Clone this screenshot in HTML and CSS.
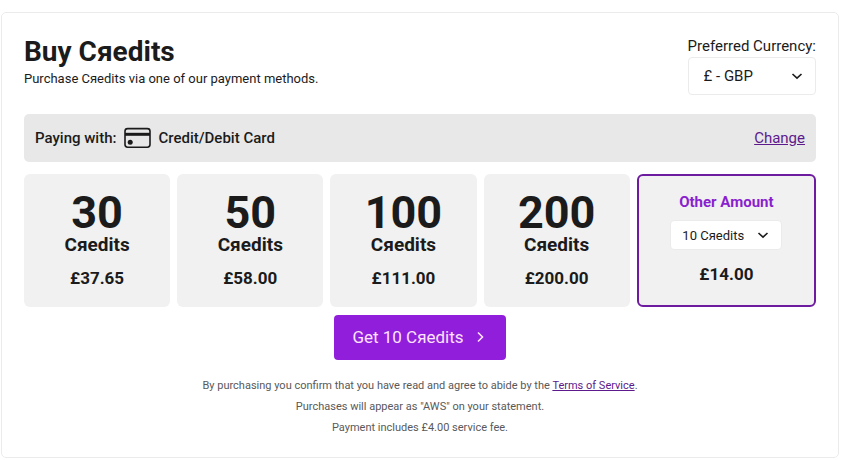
FILE: index.html
```html
<!DOCTYPE html>
<html lang="en">
<head>
<meta charset="utf-8">
<meta name="viewport" content="width=device-width, initial-scale=1">
<title>Buy Cяedits</title>
<link rel="stylesheet" href="styles.css">
</head>
<body>
<main class="panel">
  <header class="top">
    <div>
      <h1 class="title">Buy Cяedits</h1>
      <p class="subtitle">Purchase Cяedits via one of our payment methods.</p>
    </div>
    <div class="currency">
      <label class="currency-label" for="currency">Preferred Currency:</label>
      <div class="select select-large">
        <select id="currency"><option>£ - GBP</option></select>
        <svg class="chevron" viewBox="0 0 12 12" aria-hidden="true"><path d="M1.5 4L6 8.2 10.5 4"/></svg>
      </div>
    </div>
  </header>

  <section class="method">
    <span>Paying with:</span>
    <svg class="card-icon" viewBox="0 0 28 22" aria-hidden="true">
      <rect class="card-outline" x="2" y="1.6" width="25" height="18.6" rx="2.6"/>
      <path class="card-fill" d="M2 5.8h25v3H2z"/>
      <circle class="card-fill" cx="7.2" cy="15.2" r="2.5"/>
    </svg>
    <span>Credit/Debit Card</span>
    <a class="change" href="#">Change</a>
  </section>

  <section class="packs">
    <button class="pack" type="button">
      <span class="amount">30</span><span class="unit">Cяedits</span><span class="price">£37.65</span>
    </button>
    <button class="pack" type="button">
      <span class="amount">50</span><span class="unit">Cяedits</span><span class="price">£58.00</span>
    </button>
    <button class="pack" type="button">
      <span class="amount">100</span><span class="unit">Cяedits</span><span class="price">£111.00</span>
    </button>
    <button class="pack" type="button">
      <span class="amount">200</span><span class="unit">Cяedits</span><span class="price">£200.00</span>
    </button>
    <div class="pack pack-other">
      <label class="other-label" for="other">Other Amount</label>
      <div class="select select-small">
        <select id="other"><option>10 Cяedits</option></select>
        <svg class="chevron" viewBox="0 0 12 12" aria-hidden="true"><path d="M1.5 4L6 8.2 10.5 4"/></svg>
      </div>
      <span class="price">£14.00</span>
    </div>
  </section>

  <button class="buy" type="button">
    <span>Get 10 Cяedits</span>
    <svg class="buy-arrow" viewBox="0 0 12 12" aria-hidden="true"><path d="M4 1.5L8.5 6 4 10.5"/></svg>
  </button>

  <footer class="notes">
    <p>By purchasing you confirm that you have read and agree to abide by the <a href="#">Terms of Service</a>.</p>
    <p>Purchases will appear as "AWS" on your statement.</p>
    <p>Payment includes £4.00 service fee.</p>
  </footer>
</main>
</body>
</html>
```

FILE: styles.css
```css
* {
  box-sizing: border-box;
}

body {
  margin: 12px 11px 0 1px;
  background: #fff;
  color: #1b1b1b;
  font-family: Roboto, "Liberation Sans", sans-serif;
}

h1,
p {
  margin: 0;
}

button,
select {
  font: inherit;
  color: inherit;
}

a {
  color: #5c1a8c;
}

.panel {
  display: flex;
  flex-direction: column;
  padding: 22px 22px 19px;
  border: 1px solid #ebebeb;
  border-radius: 5px;
}

.top {
  display: flex;
  justify-content: space-between;
}

.title {
  font-size: 28px;
  line-height: 34px;
  font-weight: 700;
}

.subtitle {
  font-size: 13px;
  line-height: 20px;
}

.currency-label {
  display: block;
  font-size: 15px;
  line-height: 22px;
}

.select {
  display: grid;
  align-items: center;
  background: #fff;
  border: 1px solid #ebebeb;
  border-radius: 4px;
  font-weight: 400;
}

.select select {
  grid-area: 1 / 1;
  width: 100%;
  height: 100%;
  margin: 0;
  border: 0;
  background: none;
  appearance: none;
}

.select-large {
  height: 38px;
  font-size: 15px;
}

.select-large select {
  padding: 0 36px 0 15px;
}

.select-small {
  width: 112px;
  height: 30px;
  font-size: 13px;
}

.select-small select {
  padding: 0 30px 0 11px;
}

.chevron {
  grid-area: 1 / 1;
  justify-self: end;
  width: 12px;
  height: 12px;
  margin-right: 12px;
  fill: none;
  stroke: #1b1b1b;
  stroke-width: 1.6;
  pointer-events: none;
}

.method {
  display: flex;
  align-items: center;
  gap: 7px;
  height: 48px;
  margin-top: 19px;
  padding: 0 11px;
  background: #e8e8e8;
  border-radius: 5px;
  font-size: 15px;
  font-weight: 500;
}

.card-icon {
  width: 28px;
  height: 22px;
}

.card-outline {
  fill: none;
  stroke: #1b1b1b;
  stroke-width: 1.6;
}

.card-fill {
  fill: #1b1b1b;
}

.change {
  margin-left: auto;
  font-weight: 400;
}

.packs {
  display: grid;
  grid-template-columns: repeat(4, 146fr) 179fr;
  gap: 7px;
  margin-top: 12px;
}

.pack {
  display: flex;
  flex-direction: column;
  align-items: center;
  justify-content: flex-start;
  height: 133px;
  padding: 16px 0 0;
  background: #f1f1f1;
  border: 0;
  border-radius: 6px;
  font-weight: 700;
}

.amount {
  font-size: 45px;
  line-height: 46px;
}

.unit {
  font-size: 19px;
  line-height: 18px;
}

.price {
  margin-top: 14px;
  font-size: 17px;
  line-height: 20px;
}

.pack-other {
  border: 2px solid #6d1b9f;
}

.other-label {
  margin: 0 0 8px;
  color: #8a1fce;
  font-size: 15px;
  line-height: 20px;
}

.buy {
  display: flex;
  align-items: center;
  align-self: center;
  gap: 10px;
  height: 45px;
  margin-top: 8px;
  padding: 0 20px 1px 18px;
  background: #911edb;
  border: 0;
  border-radius: 4px;
  color: #fbe3ff;
  font-size: 17px;
}

.buy-arrow {
  width: 12px;
  height: 12px;
  fill: none;
  stroke: #fbe3ff;
  stroke-width: 1.6;
}

.notes {
  margin-top: 15px;
  color: #595959;
  font-size: 11px;
  line-height: 21px;
  text-align: center;
}
```
